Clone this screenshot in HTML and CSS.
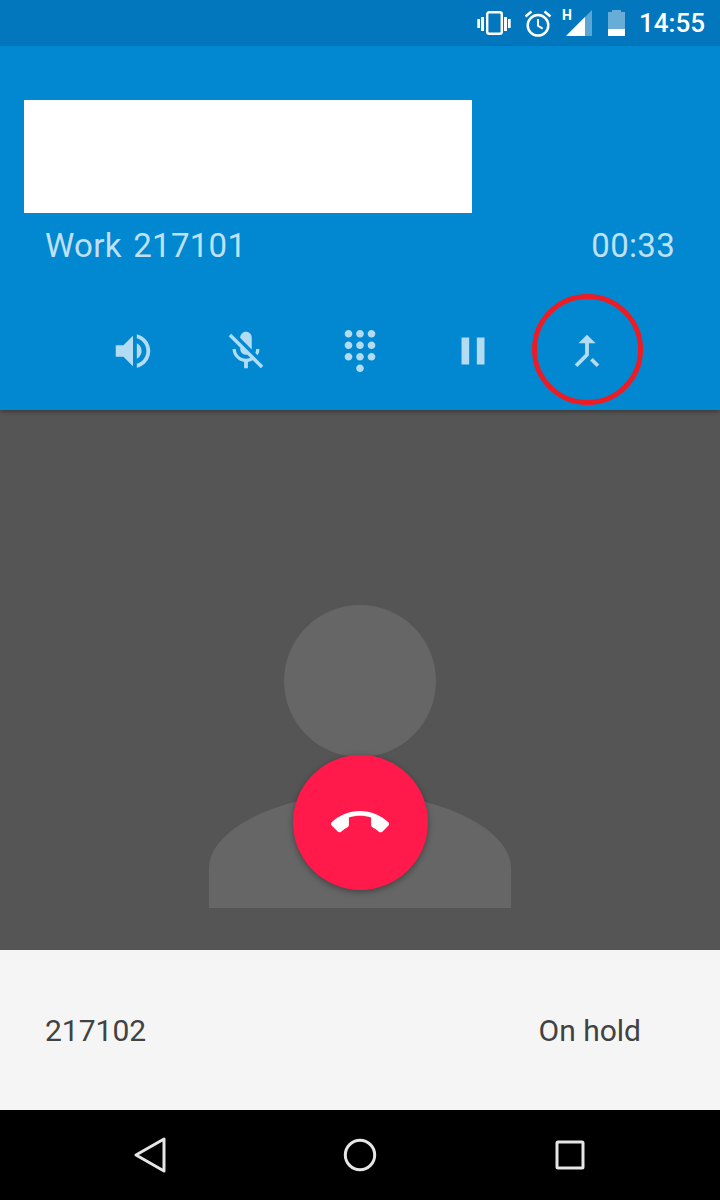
FILE: index.html
```html
<!DOCTYPE html>
<html lang="en">
<head>
  <meta charset="UTF-8">
  <meta name="viewport" content="width=device-width, initial-scale=1.0">
  <title>Call</title>
  <link rel="stylesheet" href="styles.css">
</head>
<body>
  <div class="statusbar">
    <svg class="st-vibrate" width="36" height="28" viewBox="0 0 36 28">
      <rect x="11.200" y="3.200" width="14.600" height="21.600" rx="2" fill="none" stroke="#fff" stroke-width="2.400"/>
      <path d="M1.300 10H4v9H1.300zM5 8h3v14H5zM28 8h3v14h-3zM32 10h2.700v9H32z" fill="#fff"/>
    </svg>
    <svg class="st-alarm" width="28" height="28" viewBox="0 0 28 28">
      <circle cx="14" cy="16.300" r="10.300" fill="none" stroke="#fff" stroke-width="2.500"/>
      <path d="M14 10v6.800l4.700 2.800" fill="none" stroke="#fff" stroke-width="2"/>
      <path d="M7.500 2.500 1.500 7.500M20.500 2.500l6 5" fill="none" stroke="#fff" stroke-width="2.500"/>
    </svg>
    <span class="st-h">H</span>
    <svg class="st-signal" width="28" height="28" viewBox="0 0 28 28">
      <path d="M1 27 27 1v26z" fill="#fff" fill-opacity=".35"/>
      <path d="M1 27 20 8v19z" fill="#fff"/>
    </svg>
    <svg class="st-battery" width="17" height="26" viewBox="0 0 17 26">
      <path d="M4 0h9v2h4v17H0V2h4z" fill="#fff" fill-opacity=".4"/>
      <rect y="19" width="17" height="7" fill="#fff"/>
    </svg>
    <span class="st-time">14:55</span>
  </div>

  <header class="call-card">
    <div class="redacted"></div>
    <div class="call-info">
      <span>Work 217101</span>
      <span>00:33</span>
    </div>
    <div class="call-buttons">
      <div class="call-btn">
        <svg viewBox="0 0 24 24"><path d="M3 9v6h4l5 5V4L7 9H3zm13.500 3c0-1.770-1.020-3.290-2.500-4.030v8.050c1.480-.73 2.500-2.250 2.500-4.020zM14 3.230v2.060c2.890.86 5 3.540 5 6.710s-2.110 5.850-5 6.710v2.060c4.010-.91 7-4.490 7-8.770s-2.990-7.860-7-8.770z"/></svg>
      </div>
      <div class="call-btn">
        <svg viewBox="0 0 24 24"><path d="M19 11h-1.700c0 .74-.16 1.430-.43 2.050l1.230 1.230c.56-.98.9-2.090.9-3.280zm-4.020.17c0-.06.02-.11.02-.17V5c0-1.660-1.340-3-3-3s-3 1.340-3 3v.18l5.980 5.990zM4.270 3L3 4.270l6.010 6.010V11c0 1.660 1.330 3 2.990 3 .22 0 .44-.03.65-.08l1.660 1.660c-.71.33-1.500.52-2.310.52-2.760 0-5.300-2.100-5.300-5.100H5c0 3.410 2.720 6.230 6 6.720V21h2v-3.280c.91-.13 1.770-.45 2.540-.9L19.730 21 21 19.730 4.270 3z"/></svg>
      </div>
      <div class="call-btn">
        <svg viewBox="0 0 24 24"><path d="M12 19c-1.100 0-2 .9-2 2s.9 2 2 2 2-.9 2-2-.9-2-2-2zM6 1c-1.100 0-2 .9-2 2s.9 2 2 2 2-.9 2-2-.9-2-2-2zm0 6c-1.100 0-2 .9-2 2s.9 2 2 2 2-.9 2-2-.9-2-2-2zm0 6c-1.100 0-2 .9-2 2s.9 2 2 2 2-.9 2-2-.9-2-2-2zm12-8c1.100 0 2-.9 2-2s-.9-2-2-2-2 .9-2 2 .9 2 2 2zm-6 8c-1.100 0-2 .9-2 2s.9 2 2 2 2-.9 2-2-.9-2-2-2zm6 0c-1.100 0-2 .9-2 2s.9 2 2 2 2-.9 2-2-.9-2-2-2zm0-6c-1.100 0-2 .9-2 2s.9 2 2 2 2-.9 2-2-.9-2-2-2zm-6 0c-1.100 0-2 .9-2 2s.9 2 2 2 2-.9 2-2-.9-2-2-2zm0-6c-1.100 0-2 .9-2 2s.9 2 2 2 2-.9 2-2-.9-2-2-2z"/></svg>
      </div>
      <div class="call-btn">
        <svg viewBox="0 0 24 24"><path d="M6 19h4V5H6v14zm8-14v14h4V5h-4z"/></svg>
      </div>
      <div class="call-btn">
        <svg viewBox="0 0 24 24"><path d="M17 20.410L18.410 19 15 15.590 13.590 17 17 20.410zM7.500 8H11v5.590L5.590 19 7 20.410l6-6V8h3.500L12 3.500 7.500 8z"/></svg>
      </div>
    </div>
    <div class="highlight-ring"></div>
  </header>

  <main class="photo">
    <svg class="avatar" width="302" height="303" viewBox="0 0 302 303">
      <circle cx="151" cy="76" r="76" fill="#666"/>
      <path d="M0 303v-40C0 225 70 189 151 189S302 225 302 263v40z" fill="#666"/>
    </svg>
    <div class="end-call">
      <svg viewBox="0 0 24 24"><path d="M12 9c-1.600 0-3.150.25-4.600.72v3.100c0 .39-.23.74-.56.9-.98.49-1.870 1.120-2.660 1.850-.18.18-.43.28-.7.28-.28 0-.53-.11-.71-.29L.29 13.080c-.18-.17-.29-.42-.29-.7 0-.28.11-.53.29-.71C3.340 8.780 7.460 7 12 7s8.660 1.780 11.710 4.670c.18.18.29.43.29.71 0 .28-.11.53-.29.71l-2.480 2.480c-.18.18-.43.29-.71.29-.27 0-.52-.11-.7-.28-.79-.74-1.690-1.360-2.670-1.850-.33-.16-.56-.51-.56-.9v-3.100C15.150 9.250 13.600 9 12 9z"/></svg>
    </div>
  </main>

  <section class="held-call">
    <span>217102</span>
    <span>On hold</span>
  </section>

  <nav class="navbar">
    <svg width="34" height="38" viewBox="0 0 34 38"><path d="M31 3v32L3 19z" fill="none" stroke="#e6e6e6" stroke-width="3" stroke-linejoin="round"/></svg>
    <svg width="34" height="34" viewBox="0 0 34 34"><circle cx="17" cy="17" r="14.700" fill="none" stroke="#e6e6e6" stroke-width="3"/></svg>
    <svg width="32" height="32" viewBox="0 0 32 32"><rect x="3" y="3" width="26" height="26" rx="1" fill="none" stroke="#e6e6e6" stroke-width="3"/></svg>
  </nav>
</body>
</html>
```

FILE: styles.css
```css
:root {
  --blue: #0288d1;
  --blue-dark: #0277bd;
  --icon: rgba(255,255,255,0.7);
}

html, body {
  margin: 0;
  padding: 0;
}

body {
  width: 720px;
  height: 1200px;
  overflow: hidden;
  font-family: Roboto, sans-serif;
  display: flex;
  flex-direction: column;
}

.statusbar {
  height: 46px;
  flex-shrink: 0;
  background-color: var(--blue-dark);
  display: flex;
  align-items: center;
  position: relative;
  padding-left: 476px;
  color: #fff;
}

.st-alarm { margin-left: 12px; }
.st-h {
  width: 9px;
  margin-left: 10px;
  margin-top: -16px;
  font-size: 14px;
  font-weight: 700;
}
.st-signal { margin-left: -6px; }
.st-battery { margin-left: 15px; }
.st-time {
  margin-left: 14px;
  font-size: 26px;
  font-weight: 500;
}

.call-card {
  height: 364px;
  flex-shrink: 0;
  background-color: var(--blue);
  box-shadow: 0 2px 4px rgba(0,0,0,0.3);
  position: relative;
  z-index: 1;
  display: flex;
  flex-direction: column;
}

.redacted {
  width: 448px;
  height: 113px;
  margin: 54px 0 0 24px;
  background-color: #fff;
}

.call-info {
  display: flex;
  justify-content: space-between;
  margin-top: 14px;
  padding: 0 45px;
  font-size: 33px;
  line-height: 38px;
  letter-spacing: 0.3px;
  word-spacing: 3px;
  color: rgba(255,255,255,0.75);
}

.call-buttons {
  display: grid;
  grid-template-columns: repeat(5, 113.5px);
  margin: 63px 0 0 76px;
}

.call-btn {
  display: flex;
  justify-content: center;
}

.call-btn svg {
  width: 46px;
  height: 46px;
  fill: var(--icon);
}

.highlight-ring {
  position: absolute;
  left: 532px;
  top: 248px;
  width: 101px;
  height: 101px;
  border: 5px solid #ed1c24;
  border-radius: 50%;
}

.photo {
  height: 540px;
  flex-shrink: 0;
  background-color: #555;
  position: relative;
  display: flex;
  justify-content: center;
  padding-top: 195px;
  box-sizing: border-box;
}

.end-call {
  position: absolute;
  left: 292.500px;
  top: 345px;
  width: 135px;
  height: 135px;
  border-radius: 50%;
  background-color: #ff1a4b;
  box-shadow: 0 2px 6px rgba(0,0,0,0.35);
  display: flex;
  align-items: center;
  justify-content: center;
}

.end-call svg {
  width: 58px;
  height: 58px;
  fill: #fff;
}

.held-call {
  height: 160px;
  flex-shrink: 0;
  background-color: #f5f5f5;
  display: flex;
  align-items: center;
  justify-content: space-between;
  padding: 0 79px 0 45px;
  box-sizing: border-box;
  font-size: 30px;
  color: #424242;
}

.navbar {
  height: 90px;
  flex-shrink: 0;
  background-color: #000;
  display: grid;
  grid-template-columns: repeat(3, 210px);
  justify-content: center;
  justify-items: center;
  align-items: center;
}
```
